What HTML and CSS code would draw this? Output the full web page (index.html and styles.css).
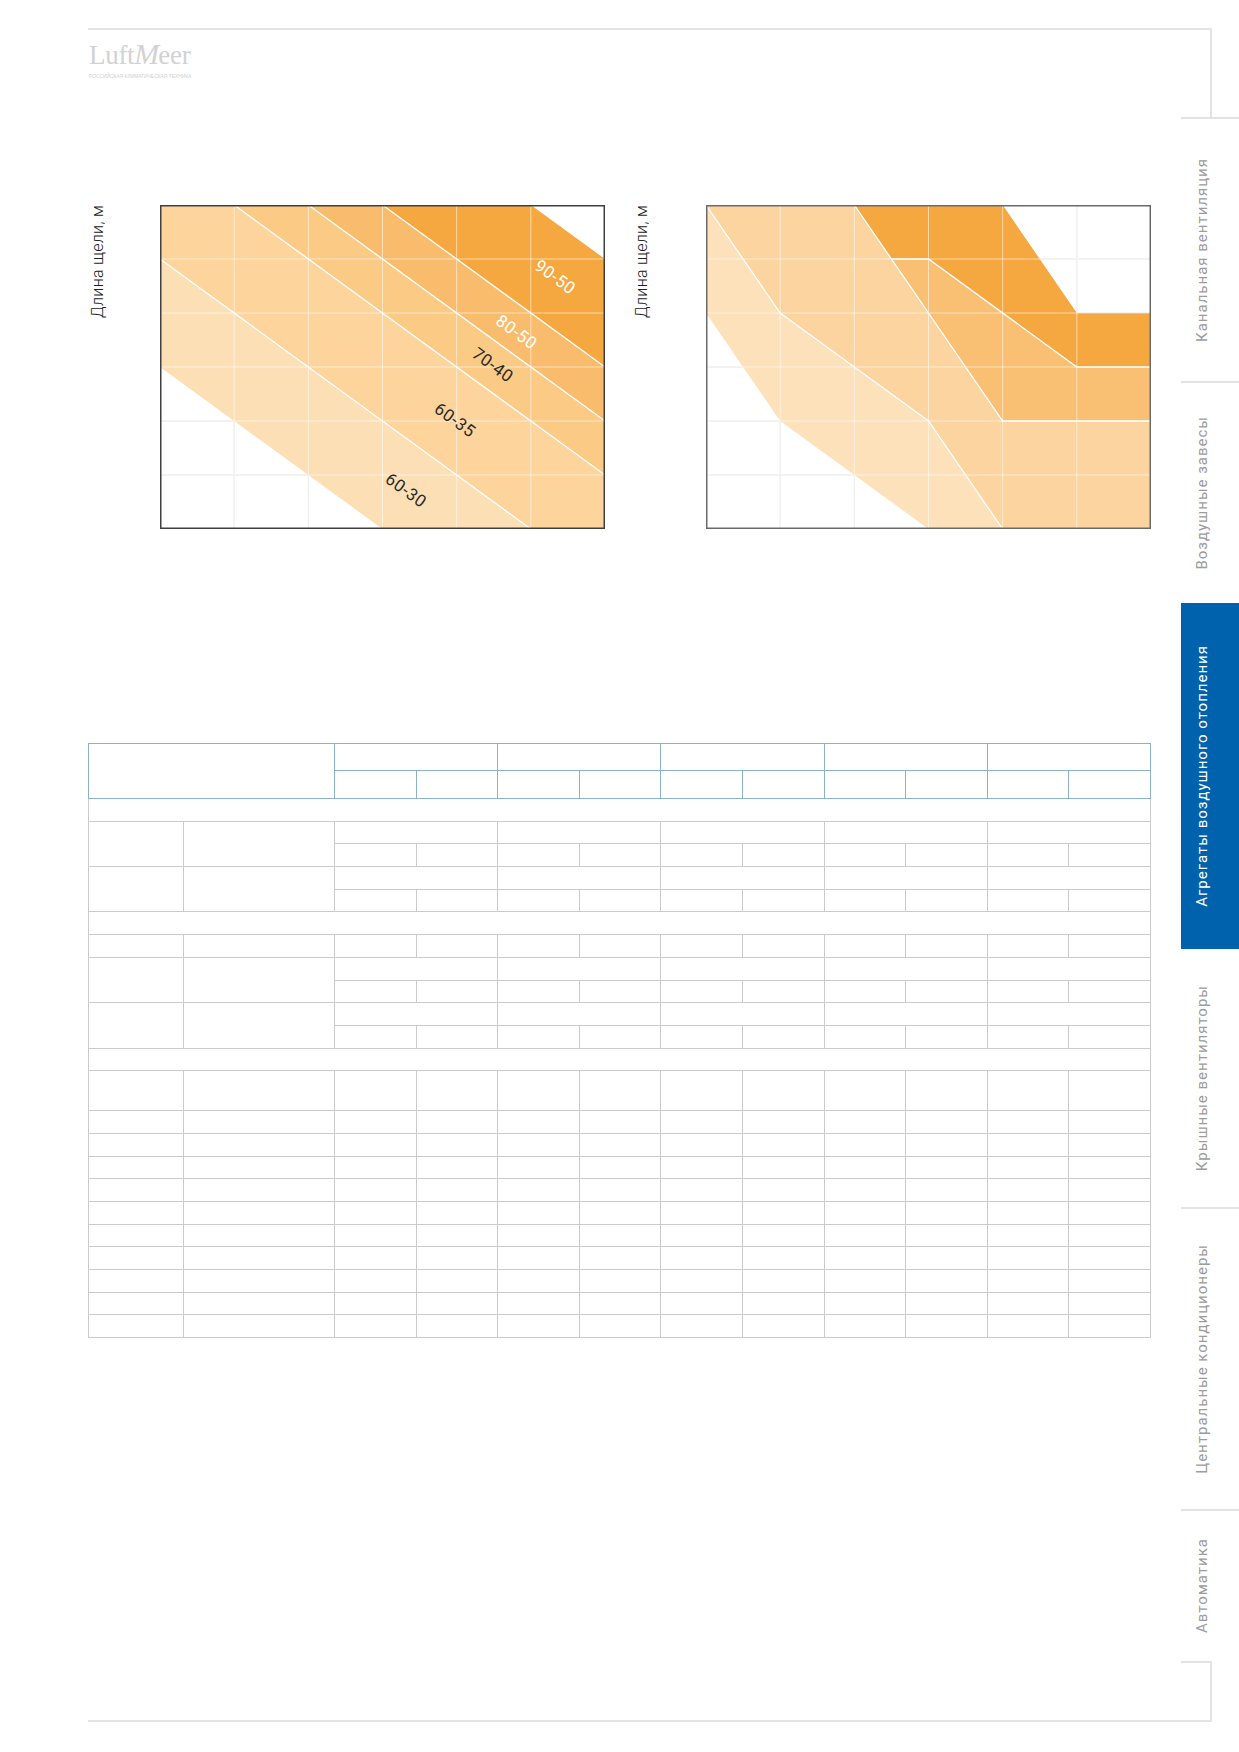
FILE: index.html
```html
<!DOCTYPE html>
<html lang="ru">
<head>
<meta charset="utf-8">
<title>LuftMeer — Агрегаты воздушного отопления</title>
<link rel="stylesheet" href="styles.css">
</head>
<body>
<div class="page">
  <header class="topframe">
    <div class="logo">
      <div class="logo-word"><span class="luft">Luft</span><span class="meer"><span class="m">M</span>eer</span></div>
      <div class="logo-tag">РОССИЙСКАЯ КЛИМАТИЧЕСКАЯ ТЕХНИКА</div>
    </div>
  </header>

  <div class="layout">
    <main class="main">
      <section class="charts">
        <div class="chart-block">
          <div class="ylabel">Длина щели, м</div>
          <svg class="chart" width="445" height="324" viewBox="0 0 445 324">
            <g class="grid-under">
              <line x1="74.17" y1="0" x2="74.17" y2="324"/><line x1="148.33" y1="0" x2="148.33" y2="324"/>
              <line x1="222.5" y1="0" x2="222.5" y2="324"/><line x1="296.67" y1="0" x2="296.67" y2="324"/>
              <line x1="370.83" y1="0" x2="370.83" y2="324"/>
              <line x1="0" y1="54" x2="445" y2="54"/><line x1="0" y1="108" x2="445" y2="108"/>
              <line x1="0" y1="162" x2="445" y2="162"/><line x1="0" y1="216" x2="445" y2="216"/>
              <line x1="0" y1="270" x2="445" y2="270"/>
            </g>
            <polygon class="c1" points="0,54 370.83,324 222.5,324 0,162"/>
            <polygon class="c2" points="0,0 74.17,0 445,270 445,324 370.83,324 0,54"/>
            <polygon class="c3" points="74.17,0 148.33,0 445,216 445,270"/>
            <polygon class="c4" points="148.33,0 222.5,0 445,162 445,216"/>
            <polygon class="c5" points="222.5,0 370.83,0 445,54 445,162"/>
            <g class="grid-over">
              <line x1="74.17" y1="0" x2="74.17" y2="324"/><line x1="148.33" y1="0" x2="148.33" y2="324"/>
              <line x1="222.5" y1="0" x2="222.5" y2="324"/><line x1="296.67" y1="0" x2="296.67" y2="324"/>
              <line x1="370.83" y1="0" x2="370.83" y2="324"/>
              <line x1="0" y1="54" x2="445" y2="54"/><line x1="0" y1="108" x2="445" y2="108"/>
              <line x1="0" y1="162" x2="445" y2="162"/><line x1="0" y1="216" x2="445" y2="216"/>
              <line x1="0" y1="270" x2="445" y2="270"/>
            </g>
            <g class="bounds">
              <line x1="0" y1="54" x2="370.83" y2="324"/>
              <line x1="74.17" y1="0" x2="445" y2="270"/>
              <line x1="148.33" y1="0" x2="445" y2="216"/>
              <line x1="222.5" y1="0" x2="445" y2="162"/>
            </g>
            <text class="lbl light" x="395.3" y="71.8" transform="rotate(36.06 395.3 71.8)">90-50</text>
            <text class="lbl light" x="356.7" y="126.9" transform="rotate(36.06 356.7 126.9)">80-50</text>
            <text class="lbl" x="333" y="159.8" transform="rotate(36.06 333 159.8)">70-40</text>
            <text class="lbl" x="295.2" y="214.9" transform="rotate(36.06 295.2 214.9)">60-35</text>
            <text class="lbl" x="246.2" y="285.1" transform="rotate(36.06 246.2 285.1)">60-30</text>
            <rect class="frame" x="0.75" y="0.75" width="443.5" height="322.5"/>
          </svg>
        </div>

        <div class="chart-block second">
          <div class="ylabel">Длина щели, м</div>
          <svg class="chart" width="445" height="324" viewBox="0 0 445 324">
            <g class="grid-under">
              <line x1="74.17" y1="0" x2="74.17" y2="324"/><line x1="148.33" y1="0" x2="148.33" y2="324"/>
              <line x1="222.5" y1="0" x2="222.5" y2="324"/><line x1="296.67" y1="0" x2="296.67" y2="324"/>
              <line x1="370.83" y1="0" x2="370.83" y2="324"/>
              <line x1="0" y1="54" x2="445" y2="54"/><line x1="0" y1="108" x2="445" y2="108"/>
              <line x1="0" y1="162" x2="445" y2="162"/><line x1="0" y1="216" x2="445" y2="216"/>
              <line x1="0" y1="270" x2="445" y2="270"/>
            </g>
            <polygon class="d1" points="0,0 74.17,108 222.5,216 296.67,324 222.5,324 74.17,216 0,108"/>
            <polygon class="d2" points="0,0 148.33,0 222.5,108 296.67,216 445,216 445,324 296.67,324 222.5,216 74.17,108"/>
            <polygon class="d3" points="185.42,54 222.5,54 370.83,162 445,162 445,216 296.67,216 222.5,108"/>
            <polygon class="d4" points="148.33,0 296.67,0 370.83,108 445,108 445,162 370.83,162 222.5,54 185.42,54"/>
            <g class="grid-over">
              <line x1="74.17" y1="0" x2="74.17" y2="324"/><line x1="148.33" y1="0" x2="148.33" y2="324"/>
              <line x1="222.5" y1="0" x2="222.5" y2="324"/><line x1="296.67" y1="0" x2="296.67" y2="324"/>
              <line x1="370.83" y1="0" x2="370.83" y2="324"/>
              <line x1="0" y1="54" x2="445" y2="54"/><line x1="0" y1="108" x2="445" y2="108"/>
              <line x1="0" y1="162" x2="445" y2="162"/><line x1="0" y1="216" x2="445" y2="216"/>
              <line x1="0" y1="270" x2="445" y2="270"/>
            </g>
            <g class="bounds">
              <polyline points="0,0 74.17,108 222.5,216 296.67,324"/>
              <polyline points="148.33,0 222.5,108 296.67,216 445,216"/>
              <polyline points="185.42,54 222.5,54 370.83,162 445,162"/>
            </g>
            <rect class="frame grey" x="0.75" y="0.75" width="443.5" height="322.5"/>
          </svg>
        </div>
      </section>

      <table class="spec">
        <colgroup>
          <col class="ca"><col class="cb">
          <col class="cs"><col class="cs"><col class="cs"><col class="cs"><col class="cs">
          <col class="cs"><col class="cs"><col class="cs"><col class="cs"><col class="cs">
        </colgroup>
        <thead>
          <tr class="h1"><th rowspan="2" colspan="2"></th><th colspan="2"></th><th colspan="2"></th><th colspan="2"></th><th colspan="2"></th><th colspan="2"></th></tr>
          <tr class="h2"><th></th><th></th><th></th><th></th><th></th><th></th><th></th><th></th><th></th><th></th></tr>
        </thead>
        <tbody>
          <tr class="r"><td colspan="12"></td></tr>
          <tr class="r"><td rowspan="2"></td><td rowspan="2"></td><td colspan="2"></td><td colspan="2"></td><td colspan="2"></td><td colspan="2"></td><td colspan="2"></td></tr>
          <tr class="r"><td></td><td></td><td></td><td></td><td></td><td></td><td></td><td></td><td></td><td></td></tr>
          <tr class="r"><td rowspan="2"></td><td rowspan="2"></td><td colspan="2"></td><td colspan="2"></td><td colspan="2"></td><td colspan="2"></td><td colspan="2"></td></tr>
          <tr class="r"><td></td><td></td><td></td><td></td><td></td><td></td><td></td><td></td><td></td><td></td></tr>
          <tr class="r"><td colspan="12"></td></tr>
          <tr class="r"><td></td><td></td><td></td><td></td><td></td><td></td><td></td><td></td><td></td><td></td><td></td><td></td></tr>
          <tr class="r"><td rowspan="2"></td><td rowspan="2"></td><td colspan="2"></td><td colspan="2"></td><td colspan="2"></td><td colspan="2"></td><td colspan="2"></td></tr>
          <tr class="r"><td></td><td></td><td></td><td></td><td></td><td></td><td></td><td></td><td></td><td></td></tr>
          <tr class="r"><td rowspan="2"></td><td rowspan="2"></td><td colspan="2"></td><td colspan="2"></td><td colspan="2"></td><td colspan="2"></td><td colspan="2"></td></tr>
          <tr class="r"><td></td><td></td><td></td><td></td><td></td><td></td><td></td><td></td><td></td><td></td></tr>
          <tr class="r"><td colspan="12"></td></tr>
          <tr class="tall"><td></td><td></td><td></td><td></td><td></td><td></td><td></td><td></td><td></td><td></td><td></td><td></td></tr>
          <tr class="r"><td></td><td></td><td></td><td></td><td></td><td></td><td></td><td></td><td></td><td></td><td></td><td></td></tr>
          <tr class="r"><td></td><td></td><td></td><td></td><td></td><td></td><td></td><td></td><td></td><td></td><td></td><td></td></tr>
          <tr class="r"><td></td><td></td><td></td><td></td><td></td><td></td><td></td><td></td><td></td><td></td><td></td><td></td></tr>
          <tr class="r"><td></td><td></td><td></td><td></td><td></td><td></td><td></td><td></td><td></td><td></td><td></td><td></td></tr>
          <tr class="r"><td></td><td></td><td></td><td></td><td></td><td></td><td></td><td></td><td></td><td></td><td></td><td></td></tr>
          <tr class="r"><td></td><td></td><td></td><td></td><td></td><td></td><td></td><td></td><td></td><td></td><td></td><td></td></tr>
          <tr class="r"><td></td><td></td><td></td><td></td><td></td><td></td><td></td><td></td><td></td><td></td><td></td><td></td></tr>
          <tr class="r"><td></td><td></td><td></td><td></td><td></td><td></td><td></td><td></td><td></td><td></td><td></td><td></td></tr>
          <tr class="r"><td></td><td></td><td></td><td></td><td></td><td></td><td></td><td></td><td></td><td></td><td></td><td></td></tr>
          <tr class="r"><td></td><td></td><td></td><td></td><td></td><td></td><td></td><td></td><td></td><td></td><td></td><td></td></tr>
        </tbody>
      </table>
    </main>

    <nav class="sidebar">
      <div class="tab t1"><span>Канальная вентиляция</span></div>
      <div class="tab t2"><span>Воздушные завесы</span></div>
      <div class="tab t3 active"><span>Агрегаты воздушного отопления</span></div>
      <div class="tab t4"><span>Крышные вентиляторы</span></div>
      <div class="tab t5"><span>Центральные кондиционеры</span></div>
      <div class="tab t6"><span>Автоматика</span></div>
    </nav>
  </div>

  <footer class="bottomframe">
    <div class="bottom-tick"></div>
  </footer>
</div>
</body>
</html>
```

FILE: styles.css
```css
* { box-sizing: border-box; }

html, body {
  margin: 0;
  padding: 0;
  background: #ffffff;
}

body {
  font-family: Roboto, "Noto Sans", Arial, sans-serif;
  color: #333;
}

.page {
  width: 1239px;
  height: 1752px;
  overflow: hidden;
}

/* ---------- top frame & logo ---------- */
.topframe {
  margin-top: 28px;
  margin-left: 88px;
  width: 1124px;
  height: 89px;
  border-top: 2px solid #e3e3e3;
  border-right: 2px solid #e3e3e3;
}

.logo {
  margin-top: 10px;
  margin-left: 1px;
  width: 104px;
  color: #d2d2d2;
}

.logo-word {
  font-family: "Liberation Serif", "Times New Roman", serif;
  font-size: 27px;
  line-height: 27px;
  white-space: nowrap;
  letter-spacing: -0.3px;
}

.logo-word .m {
  font-style: italic;
  font-size: 30px;
  letter-spacing: -1px;
}

.logo-tag {
  margin-top: 5px;
  font-family: "Liberation Sans", Arial, sans-serif;
  font-size: 4.9px;
  line-height: 6px;
  white-space: nowrap;
  color: #cfcfcf;
}

/* ---------- layout ---------- */
.layout {
  display: grid;
  grid-template-columns: 1181px 58px;
}

.main {
  padding-left: 88px;
  padding-top: 88px;
}

/* ---------- charts ---------- */
.charts {
  display: flex;
  height: 324px;
}

.chart-block {
  display: flex;
  align-items: flex-start;
}

.chart-block.second {
  margin-left: 27.5px;
}

.ylabel {
  writing-mode: vertical-rl;
  transform: rotate(180deg);
  width: 20px;
  line-height: 20px;
  font-family: Roboto, Arial, sans-serif;
  font-weight: 300;
  font-size: 16px;
  letter-spacing: 0.3px;
  color: #222;
  white-space: nowrap;
  margin-right: 51.5px;
}

.chart-block.second .ylabel {
  margin-right: 54px;
}

.chart {
  display: block;
  overflow: visible;
}

.grid-under line { stroke: #dedede; stroke-width: 1; }
.grid-over line { stroke: rgba(255, 255, 255, 0.55); stroke-width: 1; }
.bounds line, .bounds polyline {
  stroke: #ffffff;
  stroke-width: 1.3;
  fill: none;
  stroke-linejoin: miter;
}

.c1 { fill: #fddfb5; }
.c2 { fill: #fcd49c; }
.c3 { fill: #fbca85; }
.c4 { fill: #f9bc6c; }
.c5 { fill: #f5a840; }

.d1 { fill: #fde1bb; }
.d2 { fill: #fcd4a0; }
.d3 { fill: #f9bf73; }
.d4 { fill: #f5a840; }

.frame {
  fill: none;
  stroke: #3f3f3f;
  stroke-width: 1.5;
}
.frame.grey { stroke: #6a6a6a; }

.lbl {
  font-family: Roboto, Arial, sans-serif;
  font-size: 17px;
  letter-spacing: 0.6px;
  fill: #2a2a2a;
  text-anchor: middle;
  dominant-baseline: central;
}
.lbl.light { fill: #ffffff; }

/* ---------- table ---------- */
.spec {
  margin-top: 214px;
  width: 1062px;
  border-collapse: collapse;
  table-layout: fixed;
}

.spec col.ca { width: 95px; }
.spec col.cb { width: 151px; }
.spec col.cs { width: 81.6px; }

.spec th {
  border: 1px solid #8cb1cd;
  padding: 0;
}

.spec td {
  border: 1px solid #cbcbcb;
  padding: 0;
}

.spec tr.h1 { height: 27px; }
.spec tr.h2 { height: 28px; }
.spec tr.r { height: 22.7px; }
.spec tr.tall { height: 40px; }

/* ---------- sidebar ---------- */
.sidebar {
  display: flex;
  flex-direction: column;
}

.tab {
  display: flex;
  align-items: center;
  justify-content: center;
  padding-right: 16px;
  border-top: 2px solid #e3e3e3;
  color: #9c9c9c;
  font-family: Roboto, Arial, sans-serif;
  font-size: 15px;
  letter-spacing: 1px;
}

.tab span {
  writing-mode: vertical-rl;
  transform: rotate(180deg);
  line-height: 18px;
  white-space: nowrap;
}

.tab.t1 { height: 264px; }
.tab.t2 { height: 222px; }
.tab.t3 { height: 346px; }
.tab.t4 { height: 258px; border-top: none; }
.tab.t5 { height: 302px; }
.tab.t6 { height: 152px; }

.tab.active {
  background: #0062ad;
  color: #ffffff;
  border-top: none;
}

/* ---------- bottom frame ---------- */
.bottomframe {
  margin-left: 88px;
  width: 1124px;
  height: 61px;
  border-right: 2px solid #e3e3e3;
  border-bottom: 2px solid #e3e3e3;
}

.bottom-tick {
  margin-left: 1093px;
  border-top: 2px solid #e3e3e3;
}
```
